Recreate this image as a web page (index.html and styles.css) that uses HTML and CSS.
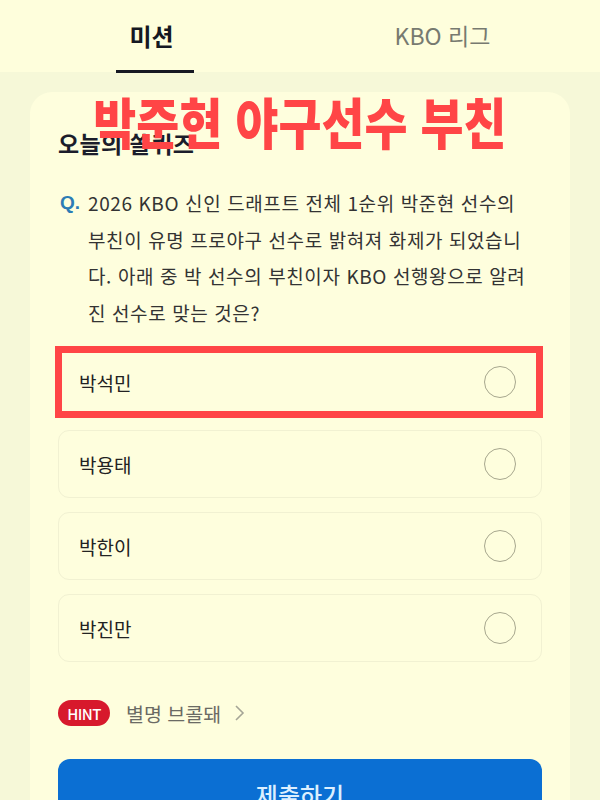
FILE: index.html
```html
<!DOCTYPE html>
<html lang="ko">
  <head>
    <meta charset="UTF-8" />
    <meta name="viewport" content="width=device-width, initial-scale=1.0" />
    <title>오늘의 쏠퀴즈</title>
    <link rel="stylesheet" href="styles.css">
  </head>
  <body>
    <nav class="tabs">
      <div class="tab active">미션</div>
      <div class="tab">KBO 리그</div>
    </nav>

    <main class="page">
      <section class="card">
        <h2 class="quiz-title">오늘의 쏠퀴즈</h2>

        <div class="question">
          <span class="q-mark">Q.</span>
          <p>2026 KBO 신인 드래프트 전체 1순위 박준현 선수의 부친이 유명 프로야구 선수로 밝혀져 화제가 되었습니다. 아래 중 박 선수의 부친이자 KBO 선행왕으로 알려진 선수로 맞는 것은?</p>
        </div>

        <ul class="options">
          <li class="option marked">박석민<span class="radio"></span></li>
          <li class="option">박용태<span class="radio"></span></li>
          <li class="option">박한이<span class="radio"></span></li>
          <li class="option">박진만<span class="radio"></span></li>
        </ul>

        <div class="hint">
          <span class="hint-badge">HINT</span>
          <span class="hint-text">별명 브콜돼</span>
          <svg class="chevron" width="12" height="18" viewBox="0 0 12 18">
            <path d="M3 2 L10 9 L3 16" fill="none" stroke="#a5a596" stroke-width="1.6" />
          </svg>
        </div>

        <button class="submit" type="button">제출하기</button>
      </section>

      <div class="caption">박준현 야구선수 부친</div>
    </main>
  </body>
</html>
```

FILE: styles.css
```css
* {
  margin: 0;
  padding: 0;
  box-sizing: border-box;
}

body {
  font-family: "Noto Sans CJK KR", "Noto Sans", sans-serif;
  background: #f6f8d8;
  color: #222;
  width: 600px;
  height: 800px;
  overflow: hidden;
}

/* Tabs */
.tabs {
  display: flex;
  height: 72px;
  background: #fefedc;
}

.tab {
  flex: 1;
  display: flex;
  align-items: center;
  justify-content: center;
  position: relative;
  font-size: 23px;
  color: #777a70;
  padding: 0 12px 2px 0;
}

.tab.active {
  color: #151822;
  font-weight: 700;
  font-size: 24px;
  padding: 0 0 2px 6px;
}

.tab.active::after {
  content: "";
  position: absolute;
  bottom: -1px;
  left: 50%;
  width: 78px;
  height: 3px;
  margin-left: -33px;
  background: #151822;
}

/* Page + card */
.page {
  position: relative;
  padding: 20px 30px 0;
}

.card {
  background: #fefedd;
  border-radius: 22px;
  padding: 35px 28px 40px;
  min-height: 760px;
}

.quiz-title {
  font-size: 23px;
  font-weight: 700;
  line-height: 32px;
  color: #1b1d2b;
  letter-spacing: 0.4px;
}

.question {
  display: flex;
  margin-top: 26px;
  padding-right: 12px;
}

.q-mark {
  flex: 0 0 30px;
  padding-left: 2px;
  font-family: "Liberation Sans", sans-serif;
  font-size: 19px;
  font-weight: 700;
  line-height: 36.5px;
  color: #2c7cb5;
}

.question p {
  font-size: 19px;
  line-height: 36.5px;
  letter-spacing: 0.6px;
  color: #333;
}

/* Options */
.options {
  list-style: none;
  display: flex;
  flex-direction: column;
  gap: 14px;
  margin-top: 17px;
}

.option {
  position: relative;
  display: flex;
  align-items: center;
  justify-content: space-between;
  height: 68px;
  padding: 0 25px 0 20px;
  border: 1px solid #f1f1d2;
  border-radius: 11px;
  font-size: 19px;
  color: #222;
}

.radio {
  width: 32px;
  height: 32px;
  border: 1.5px solid #a7a78e;
  border-radius: 50%;
}

/* red annotation drawn over the first choice */
.option.marked::after {
  content: "";
  position: absolute;
  top: -3px;
  left: -4px;
  right: -2px;
  bottom: -3px;
  border: 7px solid #ff4546;
}

/* Hint */
.hint {
  display: flex;
  align-items: center;
  margin-top: 38px;
  height: 26px;
}

.hint-badge {
  display: inline-flex;
  align-items: center;
  justify-content: center;
  width: 52px;
  height: 26px;
  border-radius: 13px;
  background: #d7192c;
  color: #fff;
  font-size: 15px;
  font-weight: 500;
  letter-spacing: -0.6px;
}

.hint-text {
  margin-left: 16px;
  font-size: 19.5px;
  color: #6a6a64;
}

.chevron {
  margin-left: 12px;
}

/* Submit */
.submit {
  display: block;
  width: 100%;
  height: 60px;
  margin-top: 33px;
  border: none;
  border-radius: 12px;
  background: #0b6fd3;
  color: #dcefff;
  font-family: inherit;
  font-size: 24px;
  font-weight: 500;
  padding-top: 10px;
}

/* Overlay caption */
.caption {
  position: absolute;
  top: 16px;
  left: 0;
  right: 0;
  text-align: center;
  font-size: 55px;
  font-weight: 900;
  line-height: 64px;
  color: #ff4546;
  transform: scaleX(0.85);
}
```
